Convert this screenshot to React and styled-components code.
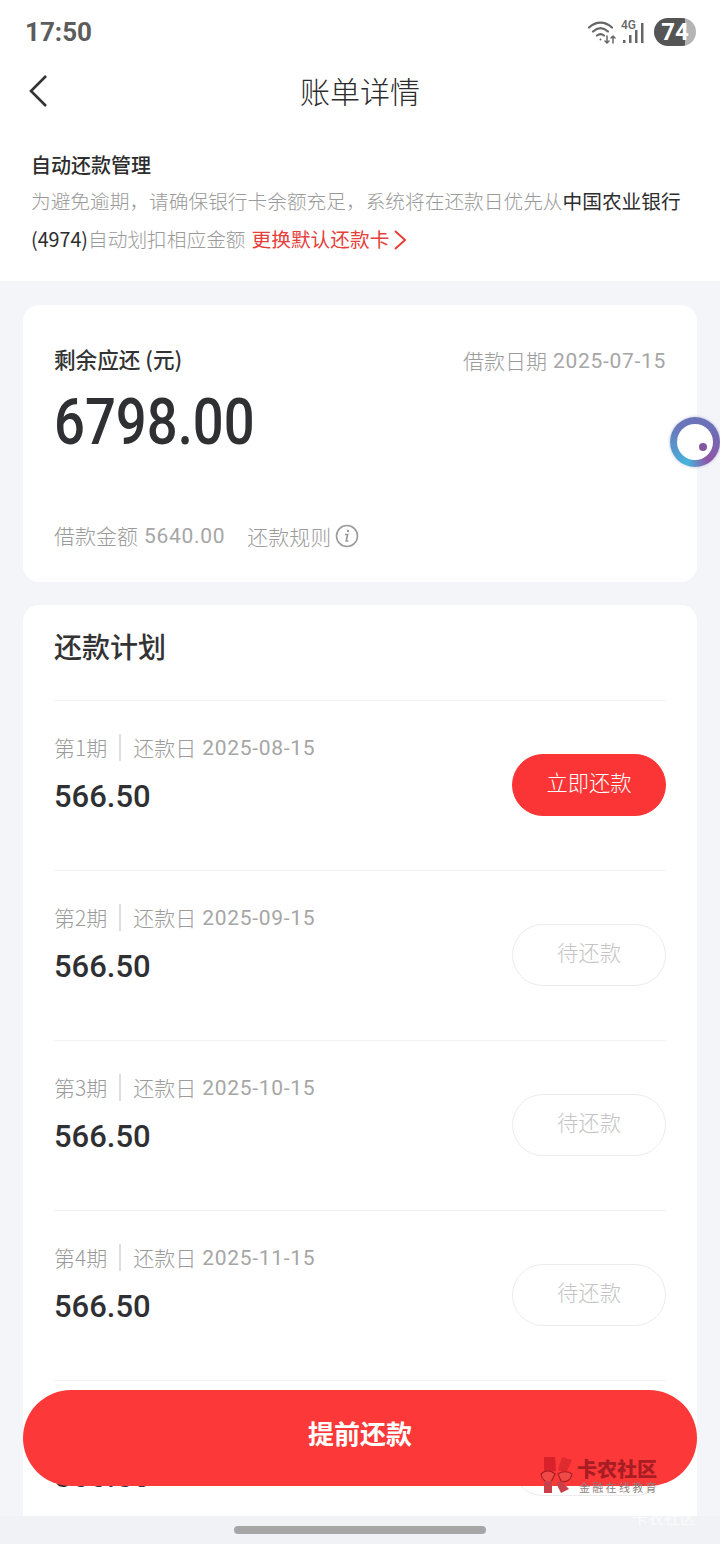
import React from "react";
import styled, { createGlobalStyle } from "styled-components";

const CN = `"Noto Sans CJK SC", "Noto Sans", sans-serif`;
const NUM = `"Roboto", "Noto Sans CJK SC", sans-serif`;

const Global = createGlobalStyle`
  html, body { margin: 0; padding: 0; background: #f4f5f9; }
  * { box-sizing: border-box; }
`;

const Page = styled.div`
  position: relative;
  width: 720px;
  height: 1544px;
  overflow: hidden;
  background: #f4f5f9;
  font-family: ${CN};
`;
const Top = styled.div`
  background: #fff;
  height: 281px;
`;
const StatusBar = styled.div`
  height: 64px;
  padding: 17px 24px 0 25px;
  display: flex;
  justify-content: space-between;
  align-items: flex-start;
`;
const Clock = styled.div`
  font: 700 26px/30px ${NUM};
  color: #5c5c5c;
`;
const StatusIcons = styled.div`
  display: flex;
  align-items: center;
  gap: 4px;
  height: 30px;
`;
const Battery = styled.div`
  width: 42px;
  height: 28px;
  border-radius: 14px;
  background: linear-gradient(90deg, #555 0 74%, #b4b4b4 74%);
  color: #fff;
  font: 700 24px/28px ${NUM};
  text-align: center;
  margin-left: 3px;
`;
const Header = styled.div`
  position: relative;
  height: 54px;
  padding-bottom: 3px;
  display: flex;
  align-items: center;
  justify-content: center;
  font-size: 30px;
  font-weight: 300;
  color: #2c2c2c;
`;
const Back = styled.svg`
  position: absolute;
  left: 28px;
  top: 10px;
`;
const Notice = styled.div`
  padding: 32px 32px 0 31px;
`;
const NoticeTitle = styled.div`
  font-size: 20px;
  font-weight: 500;
  line-height: 30px;
  color: #2d2d2d;
`;
const NoticeText = styled.div`
  font-size: 19.7px;
  font-weight: 300;
  line-height: 38px;
  margin-top: 2px;
  color: #9a9a9a;
  white-space: nowrap;
`;
const Dark = styled.span`
  color: #2d2d2d;
  font-weight: 400;
`;
const RedLink = styled.span`
  color: #e5403a;
  font-weight: 400;
  margin-left: 6px;
`;
const Chevron = styled.svg`
  margin-left: 4px;
  vertical-align: -4px;
`;
const Main = styled.div`
  padding: 24px 23px 0;
  display: flex;
  flex-direction: column;
  gap: 23px;
`;
const Card = styled.div`
  background: #fff;
  border-radius: 16px;
  padding: 0 31px;
`;
const SummaryCard = styled(Card)`
  height: 277px;
  padding-top: 38px;
`;
const SummaryTop = styled.div`
  display: flex;
  justify-content: space-between;
  align-items: center;
  height: 34px;
`;
const SummaryLabel = styled.div`
  font-size: 21.6px;
  font-weight: 500;
  color: #333;
  margin-top: -3px;
`;
const LoanDate = styled.div`
  display: flex;
  align-items: center;
  font-size: 21px;
  font-weight: 300;
  line-height: 34px;
  color: #9b9b9b;
`;
const Total = styled.div`
  font: 500 64px/74px ${NUM};
  color: #2f3033;
  margin-top: 9px;
  transform: scaleX(0.85);
  transform-origin: left center;
`;
const SummaryBottom = styled.div`
  display: flex;
  align-items: center;
  gap: 22px;
  margin-top: 58px;
  height: 34px;
  font-size: 21px;
  font-weight: 300;
  color: #9b9b9b;
`;
const LoanAmount = styled.span`
  display: flex;
  align-items: center;
`;
const Num = styled.span`
  font-family: ${NUM};
  font-weight: 400;
  color: #a6a6a6;
  letter-spacing: 0.7px;
  margin: 2px 0 0 6px;
`;
const RuleLink = styled.span`
  display: flex;
  align-items: center;
  gap: 4px;
  padding-top: 1px;
`;
const PlanCard = styled(Card)`
  height: 940px;
`;
const PlanTitle = styled.div`
  height: 95px;
  padding-top: 19px;
  font-size: 28px;
  line-height: 44px;
  font-weight: 500;
  color: #333;
`;
const Row = styled.div`
  height: 170px;
  border-top: 1px solid #f2f2f4;
  display: flex;
  justify-content: space-between;
  padding-top: 33px;
`;
const RowInfo = styled.div`
  display: flex;
  flex-direction: column;
`;
const RowMeta = styled.div`
  display: flex;
  align-items: center;
  height: 30px;
  margin-top: -2px;
  font-size: 21px;
  font-weight: 300;
  color: #9b9b9b;
`;
const MetaDivider = styled.span`
  width: 2px;
  height: 27px;
  background: #dedede;
  margin: 0 12px 0 12px;
`;
const Amount = styled.div`
  font: 500 31px/44px ${NUM};
  color: #2f3033;
  margin-top: 13px;
`;
const PayButton = styled.div`
  width: 154px;
  height: 62px;
  margin-top: 20px;
  padding-bottom: 8px;
  border-radius: 31px;
  display: flex;
  align-items: center;
  justify-content: center;
  font-size: 21.3px;
  font-weight: 300;
  background: ${(p) => (p.$active ? "#fb3535" : "#fff")};
  color: ${(p) => (p.$active ? "#fff" : "#c4c4c4")};
  border: 1px solid ${(p) => (p.$active ? "#fb3535" : "#ececec")};
`;
const BottomBar = styled.div`
  position: absolute;
  left: 0;
  right: 0;
  bottom: 0;
  height: 28px;
  background: #f1f2f5;
`;
const HomeIndicator = styled.div`
  position: absolute;
  left: 234px;
  top: 10px;
  width: 252px;
  height: 8px;
  border-radius: 4px;
  background: #a6a6a6;
`;
const Submit = styled.div`
  position: absolute;
  left: 23px;
  top: 1390px;
  width: 674px;
  height: 96px;
  border-radius: 48px;
  background: #fd3838;
  color: #fff;
  font-size: 26px;
  font-weight: 700;
  padding-bottom: 11px;
  display: flex;
  align-items: center;
  justify-content: center;
`;
const Float = styled.div`
  position: absolute;
  left: 670px;
  top: 417px;
  width: 50px;
  height: 50px;
  border-radius: 50%;
  background: conic-gradient(from 200deg, #45b4dc, #6a77bb 30%, #6b6fb6 60%, #8e56a6 85%, #45b4dc);
  box-shadow: 0 0 3px rgba(110, 110, 180, 0.5);
  display: flex;
  align-items: center;
  justify-content: center;
`;
const FloatInner = styled.div`
  position: relative;
  width: 36px;
  height: 36px;
  border-radius: 50%;
  background: #fff;
`;
const FloatDot = styled.div`
  position: absolute;
  right: 6px;
  bottom: 9px;
  width: 8px;
  height: 8px;
  border-radius: 50%;
  background: #83589f;
`;
const Mark = styled.div`
  position: absolute;
  left: 540px;
  top: 1456px;
  display: flex;
  gap: 3px;
`;
const MarkText = styled.div`
  display: flex;
  flex-direction: column;
  padding-top: 1px;
`;
const MarkName = styled.div`
  font-size: 20px;
  line-height: 24px;
  font-weight: 900;
  color: #a81d24;
`;
const MarkSub = styled.div`
  font-size: 11px;
  line-height: 13px;
  letter-spacing: 2.3px;
  padding-left: 2px;
  color: #8f7f80;
`;
const FaintMark = styled.div`
  position: absolute;
  left: 632px;
  top: 1508px;
  font-size: 16px;
  line-height: 18px;
  color: rgba(255, 255, 255, 0.7);
`;

const plans = [
  { n: 1, date: "2025-08-15", active: true },
  { n: 2, date: "2025-09-15" },
  { n: 3, date: "2025-10-15" },
  { n: 4, date: "2025-11-15" },
  { n: 5, date: "2025-12-15" },
];

const Wifi = () => (
  <svg width="30" height="28" viewBox="0 0 30 28" fill="none" stroke="#666" strokeWidth="2.2" strokeLinecap="round">
    <path d="M2 9.5C9 3 18 3 25 9.5" />
    <path d="M6 13.5C11 9 16 9 21 13.5" />
    <path d="M10 17.5C12.5 15.5 14.5 15.5 17 17.5" />
    <circle cx="13.5" cy="21.5" r="1" fill="#666" stroke="none" />
    <path strokeWidth="1.5" d="M20 18v7M18 23l2 2 2-2M26 25v-7M24 20l2-2 2 2" />
  </svg>
);

const Signal = () => (
  <svg width="26" height="28" viewBox="0 0 26 28" fill="#666">
    <text x="0" y="11" fontSize="12" fontFamily="Roboto" fontWeight="500">4G</text>
    <rect x="2" y="22" width="2.5" height="3" />
    <rect x="8" y="17" width="2.5" height="8" />
    <rect x="14" y="12" width="2.5" height="13" />
    <rect x="20" y="5" width="2.5" height="20" />
  </svg>
);

export default function App() {
  return (
    <Page>
      <Global />
      <Top>
        <StatusBar>
          <Clock>17:50</Clock>
          <StatusIcons>
            <Wifi />
            <Signal />
            <Battery>74</Battery>
          </StatusIcons>
        </StatusBar>
        <Header>
          <Back width="22" height="34" viewBox="0 0 22 34" fill="none" stroke="#333" strokeWidth="2.6">
            <path d="M18 2 3 17l15 15" />
          </Back>
          账单详情
        </Header>
        <Notice>
          <NoticeTitle>自动还款管理</NoticeTitle>
          <NoticeText>
            为避免逾期，请确保银行卡余额充足，系统将在还款日优先从<Dark>中国农业银行</Dark>
            <br />
            <Dark>(4974)</Dark>自动划扣相应金额
            <RedLink>
              更换默认还款卡
              <Chevron width="14" height="22" viewBox="0 0 14 22" fill="none" stroke="#e5403a" strokeWidth="2">
                <path d="M2 2l10 9-10 9" />
              </Chevron>
            </RedLink>
          </NoticeText>
        </Notice>
      </Top>
      <Main>
        <SummaryCard>
          <SummaryTop>
            <SummaryLabel>剩余应还 (元)</SummaryLabel>
            <LoanDate>借款日期<Num>2025-07-15</Num></LoanDate>
          </SummaryTop>
          <Total>6798.00</Total>
          <SummaryBottom>
            <LoanAmount>借款金额<Num>5640.00</Num></LoanAmount>
            <RuleLink>
              还款规则
              <svg width="24" height="24" viewBox="0 0 24 24" fill="none" stroke="#9b9b9b" strokeWidth="1.6">
                <circle cx="12" cy="12" r="10.5" />
                <path d="M10 10.5h2.6l-1.4 6.5h2.2" strokeWidth="1.7" />
                <circle cx="13" cy="7" r="1.2" fill="#9b9b9b" stroke="none" />
              </svg>
            </RuleLink>
          </SummaryBottom>
        </SummaryCard>
        <PlanCard>
          <PlanTitle>还款计划</PlanTitle>
          {plans.map((p) => (
            <Row key={p.n}>
              <RowInfo>
                <RowMeta>
                  第{p.n}期
                  <MetaDivider />
                  还款日<Num>{p.date}</Num>
                </RowMeta>
                <Amount>566.50</Amount>
              </RowInfo>
              <PayButton $active={p.active}>{p.active ? "立即还款" : "待还款"}</PayButton>
            </Row>
          ))}
        </PlanCard>
      </Main>
      <Float>
        <FloatInner>
          <FloatDot />
        </FloatInner>
      </Float>
      <Submit>提前还款</Submit>
      <Mark>
        <svg width="34" height="38" viewBox="0 0 34 38">
          <path d="M4 1h11l1 14-12 1z" fill="#d8222b" />
          <path d="M22 1l10 3-6 13-8-3z" fill="#e02a30" />
          <path d="M1 18c4-4 10-4 14 0l-4 8c-5 1-9-2-10-8z" fill="#f04a48" stroke="#a81d24" strokeWidth="1.2" />
          <path d="M18 18c4-3 10-3 14 0-1 6-6 9-11 7z" fill="#f04a48" stroke="#a81d24" strokeWidth="1.2" />
          <path d="M4 25l8 0 0 12-8 0z" fill="#c9404a" />
          <path d="M16 27l5-2 8 8-8 4z" fill="#c9404a" />
        </svg>
        <MarkText>
          <MarkName>卡农社区</MarkName>
          <MarkSub>金融在线教育</MarkSub>
        </MarkText>
      </Mark>
      <BottomBar>
        <HomeIndicator />
      </BottomBar>
      <FaintMark>卡农社区</FaintMark>
    </Page>
  );
}
